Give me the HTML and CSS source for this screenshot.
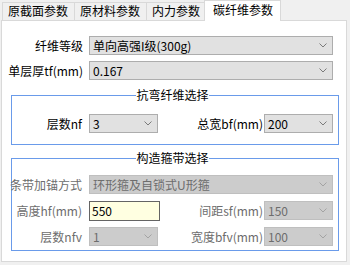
FILE: index.html
```html
<!DOCTYPE html>
<html>
<head>
<meta charset="utf-8">
<link rel="stylesheet" href="styles.css">
</head>
<body>
<div class="window">
  <div class="tabs">
    <div class="tab">原截面参数</div>
    <div class="tab">原材料参数</div>
    <div class="tab">内力参数</div>
    <div class="tab active">碳纤维参数</div>
  </div>
  <div class="panel">
    <div class="row">
      <div class="label">纤维等级</div>
      <div class="select">单向高强I级(300g)<svg class="chev" width="8" height="5" viewBox="0 0 8 5"><polyline points="0.5,0.5 4,4 7.5,0.5"/></svg></div>
    </div>
    <div class="row">
      <div class="label">单层厚tf(mm)</div>
      <div class="select">0.167<svg class="chev" width="8" height="5" viewBox="0 0 8 5"><polyline points="0.5,0.5 4,4 7.5,0.5"/></svg></div>
    </div>

    <fieldset class="group bend">
      <legend class="legend">抗弯纤维选择</legend>
      <div class="grid">
        <div class="glabel">层数nf</div>
        <div class="select">3<svg class="chev" width="8" height="5" viewBox="0 0 8 5"><polyline points="0.5,0.5 4,4 7.5,0.5"/></svg></div>
        <div class="glabel right">总宽bf(mm)</div>
        <div class="select">200<svg class="chev" width="8" height="5" viewBox="0 0 8 5"><polyline points="0.5,0.5 4,4 7.5,0.5"/></svg></div>
      </div>
    </fieldset>

    <fieldset class="group hoop">
      <legend class="legend">构造箍带选择</legend>
      <div class="grid">
        <div class="glabel off">条带加锚方式</div>
        <div class="select off span3">环形箍及自锁式U形箍<svg class="chev" width="8" height="5" viewBox="0 0 8 5"><polyline points="0.5,0.5 4,4 7.5,0.5"/></svg></div>

        <div class="glabel off">高度hf(mm)</div>
        <div class="input">550</div>
        <div class="glabel off right">间距sf(mm)</div>
        <div class="select off">150<svg class="chev" width="8" height="5" viewBox="0 0 8 5"><polyline points="0.5,0.5 4,4 7.5,0.5"/></svg></div>

        <div class="glabel off">层数nfv</div>
        <div class="select off">1<svg class="chev" width="8" height="5" viewBox="0 0 8 5"><polyline points="0.5,0.5 4,4 7.5,0.5"/></svg></div>
        <div class="glabel off right">宽度bfv(mm)</div>
        <div class="select off">100<svg class="chev" width="8" height="5" viewBox="0 0 8 5"><polyline points="0.5,0.5 4,4 7.5,0.5"/></svg></div>
      </div>
    </fieldset>
  </div>
</div>
</body>
</html>
```

FILE: styles.css
```css
* { box-sizing: border-box; }

html, body {
  margin: 0;
  padding: 0;
  background: #f0f0f0;
}

body {
  font-family: "Noto Sans CJK SC", "Noto Sans", sans-serif;
  font-size: 12px;
  color: #000;
}

.window {
  width: 350px;
  height: 265px;
  display: flex;
  flex-direction: column;
}

.tabs {
  height: 20px;
  display: flex;
  align-items: flex-end;
  padding-left: 2px;
}

.tab {
  height: 18px;
  line-height: 16px;
  padding: 0 6px 0 5px;
  border: 1px solid #d9d9d9;
  border-bottom: none;
  border-right: none;
  background: #f0f0f0;
  white-space: nowrap;
}

.tab.active {
  position: relative;
  z-index: 1;
  height: 21px;
  margin: 0 0 -1px -2px;
  padding: 0 7px 0 8px;
  line-height: 18px;
  background: #fff;
  border-right: 1px solid #d9d9d9;
}

.panel {
  margin-left: 1px;
  width: 346px;
  height: 242px;
  background: #fff;
  border: 1px solid #d9d9d9;
  padding: 15px 13px 0 0;
  display: flex;
  flex-direction: column;
}

.row {
  display: flex;
  align-items: center;
  height: 19px;
  margin-bottom: 6px;
}

.label {
  width: 81px;
  margin-right: 6px;
  text-align: right;
  white-space: nowrap;
}

.select {
  flex: 1;
  height: 19px;
  background: #e1e1e1;
  border: 1px solid #adadad;
  display: flex;
  align-items: center;
  padding: 0 5px 0 3px;
  white-space: nowrap;
  line-height: 16px;
}

.chev {
  margin-left: auto;
  flex: none;
}

.chev polyline {
  fill: none;
  stroke: #7a7a7a;
  stroke-width: 1;
}

.select.off {
  background: #cccccc;
  border-color: #bfbfbf;
  color: #6d6d6d;
}

.select.off .chev polyline {
  stroke: #a3a3a3;
}

.group {
  margin: 0 -6px 0 9px;
  padding: 0 5px 0 0;
  border: 1px solid #6a9bea;
  min-inline-size: 0;
}

.bend {
  margin-top: 1px;
  padding-bottom: 11px;
}

.hoop {
  margin-top: 5px;
  padding-bottom: 4px;
}

.legend {
  margin: 0 auto;
  padding: 0;
  line-height: 16px;
  white-space: nowrap;
}

.grid {
  display: grid;
  grid-template-columns: 77px 69px 106px 69px;
  grid-auto-rows: 19px;
  row-gap: 7px;
  align-items: center;
}

.bend .grid {
  margin-top: 11px;
}

.hoop .grid {
  margin-top: 9px;
}

.glabel {
  display: flex;
  justify-content: flex-end;
  padding-right: 7px;
  white-space: nowrap;
}

.glabel.right {
  padding-right: 1px;
}

.glabel.off {
  color: #6d6d6d;
}

.span3 {
  grid-column: 2 / 5;
}

.input {
  width: 71px;
  height: 20px;
  background: #ffffe1;
  border: 1px solid #646464;
  padding: 0 2px;
  line-height: 18px;
}
```
